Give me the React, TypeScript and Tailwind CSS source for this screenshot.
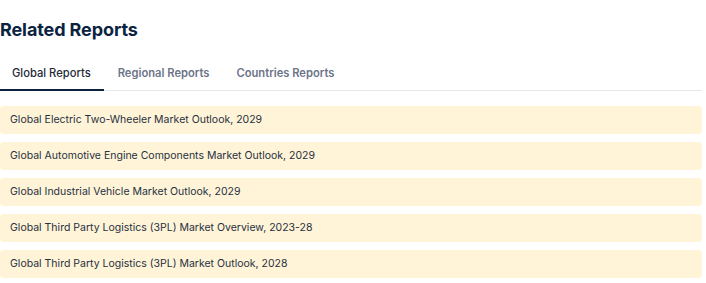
import React, { useState } from "react";

const tabs = ["Global Reports", "Regional Reports", "Countries Reports"];

const reports = [
  "Global Electric Two-Wheeler Market Outlook, 2029",
  "Global Automotive Engine Components Market Outlook, 2029",
  "Global Industrial Vehicle Market Outlook, 2029",
  "Global Third Party Logistics (3PL) Market Overview, 2023-28",
  "Global Third Party Logistics (3PL) Market Outlook, 2028",
];

export default function App() {
  const [active, setActive] = useState(0);

  return (
    <div className="bg-white w-[706px] h-[283px] pr-[4px] font-['Inter',sans-serif]">
      <h2 className="pt-[18px] text-[18px] leading-[24px] font-bold text-[#0b2341] tracking-[-0.1px]">
        Related Reports
      </h2>
      <div className="mt-[23px] flex border-b border-[#e5e7eb]">
        {tabs.map((tab, i) => (
          <button
            key={tab}
            onClick={() => setActive(i)}
            className={
              i === active
                ? "pl-[12px] pr-[13px] pb-[8px] text-[11.2px] leading-[16px] font-medium text-[#1f2937] border-b-2 border-[#0b2341] -mb-px"
                : "pl-[14px] pr-[13px] pb-[8px] text-[11.2px] leading-[16px] font-semibold text-[#6b7489] border-b-2 border-transparent -mb-px"
            }
          >
            {tab}
          </button>
        ))}
      </div>
      <div className="mt-[15px] flex flex-col gap-[8px]">
        {reports.map((r) => (
          <a
            key={r}
            href="#"
            className="block h-[28px] rounded-[4px] bg-[#fff4d8] px-[10px] text-[10.5px] leading-[28px] text-[#27303f]"
          >
            {r}
          </a>
        ))}
      </div>
    </div>
  );
}
